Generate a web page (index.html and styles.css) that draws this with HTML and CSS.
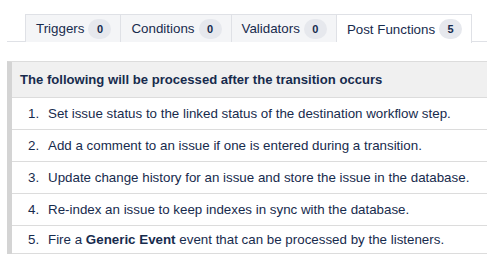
FILE: index.html
```html
<!DOCTYPE html>
<html>
<head>
<meta charset="utf-8">
<link rel="stylesheet" href="styles.css">
</head>
<body>
<div class="page">
  <div class="tabs">
    <div class="tab">Triggers <span class="badge">0</span></div>
    <div class="tab">Conditions <span class="badge">0</span></div>
    <div class="tab">Validators <span class="badge">0</span></div>
    <div class="tab active">Post Functions <span class="badge">5</span></div>
  </div>
  <div class="panel">
    <div class="head">The following will be processed after the transition occurs</div>
    <div class="row"><span class="num">1.</span><span>Set issue status to the linked status of the destination workflow step.</span></div>
    <div class="row"><span class="num">2.</span><span>Add a comment to an issue if one is entered during a transition.</span></div>
    <div class="row"><span class="num">3.</span><span>Update change history for an issue and store the issue in the database.</span></div>
    <div class="row"><span class="num">4.</span><span>Re-index an issue to keep indexes in sync with the database.</span></div>
    <div class="row"><span class="num">5.</span><span>Fire a <b>Generic Event</b> event that can be processed by the listeners.</span></div>
  </div>
</div>
</body>
</html>
```
FILE: styles.css
```css
* { box-sizing: border-box; }
html, body { margin: 0; padding: 0; background: #fff; overflow: hidden; }
body {
  font-family: "Liberation Sans", Arial, sans-serif;
  font-size: 13.35px;
  color: #172b4d;
}
.page { padding: 14px 0 0 7px; width: 487px; }
.tabs {
  display: flex;
  padding-left: 18px;
  border-bottom: 1px solid #dfe1e6;
  height: 28px;
}
.tab {
  display: flex;
  align-items: center;
  gap: 4px;
  height: 28px;
  padding: 0 9px 0 10px;
  background: #f4f5f7;
  border: 1px solid #dfe1e6;
  border-right: none;
  border-bottom: none;
  white-space: nowrap;
}
.tab:nth-child(3) { border-right: 1px solid #dfe1e6; }
.tab.active {
  background: #fff;
  height: 29px;
  border-left: none;
  border-right: 1px solid #dfe1e6;
}
.badge {
  display: inline-flex;
  align-items: center;
  justify-content: center;
  min-width: 23px;
  height: 20px;
  padding: 0 6px;
  border-radius: 10px;
  background: #e6e8ed;
  font-size: 11px;
  font-weight: bold;
  color: #172b4d;
}
.panel {
  margin-top: 19px;
  margin-right: -40px;
  border-left: 5px solid #d4d4d4;
  border-top: 1px solid #dcdcdc;
}
.head {
  background: #f0f0f0;
  font-weight: bold;
  font-size: 13.1px;
  padding: 0 8px;
  height: 36px;
  display: flex;
  align-items: center;
  border-bottom: 1px solid #dcdcdc;
}
.row {
  display: flex;
  align-items: center;
  height: 32px;
  border-bottom: 1px solid #dcdcdc;
  padding-left: 16px;
  white-space: nowrap;
}
.row:last-child { height: 28px; }
.num { width: 20px; }
```
